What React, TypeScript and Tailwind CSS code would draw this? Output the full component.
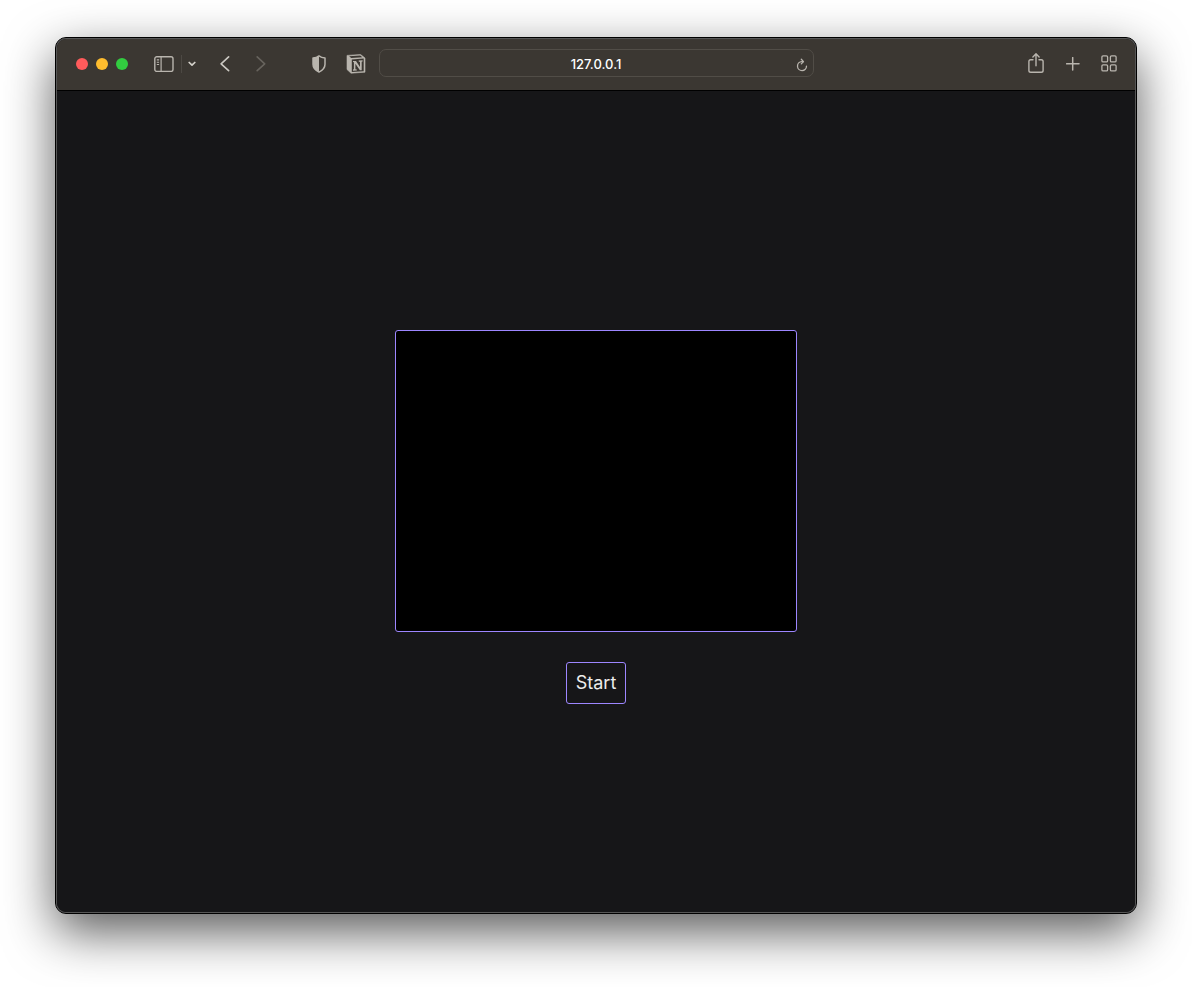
import React from "react";

const iconButton = "flex h-7 items-center justify-center text-[#b9b5ae]";

function SidebarIcon() {
  return (
    <svg width="20" height="16" viewBox="0 0 20 16" fill="none" stroke="currentColor" strokeWidth="1.4" aria-hidden="true">
      <rect x="0.8" y="0.8" width="18.2" height="14.6" rx="2" />
      <path d="M7.1 1v14.4" strokeWidth="1.2" />
      <path d="M2.8 3.9h2.3M2.8 6.2h2.3M2.8 8.5h2.3" strokeWidth="1.1" />
    </svg>
  );
}

function SmallChevron() {
  return (
    <svg width="8" height="6" viewBox="0 0 8 6" fill="none" stroke="currentColor" strokeWidth="1.7" strokeLinecap="round" strokeLinejoin="round" aria-hidden="true">
      <path d="M1.2 1.500 4 4.200l2.800-2.700" />
    </svg>
  );
}

function BackIcon() {
  return (
    <svg width="10" height="16" viewBox="0 0 10 16" fill="none" stroke="currentColor" strokeWidth="1.6" strokeLinecap="round" strokeLinejoin="round" aria-hidden="true">
      <path d="M8.600 0.900 1.100 7.800l7.500 6.900" />
    </svg>
  );
}

function ForwardIcon() {
  return (
    <svg width="10" height="16" viewBox="0 0 10 16" fill="none" stroke="currentColor" strokeWidth="1.6" strokeLinecap="round" strokeLinejoin="round" aria-hidden="true">
      <path d="M1.200 0.900 8.700 7.800l-7.500 6.900" />
    </svg>
  );
}

function ShieldIcon() {
  return (
    <svg width="14" height="18" viewBox="0 0 14 18" aria-hidden="true">
      <path d="M7 0.9C5.4 2.2 3.3 2.9 1 3v6.2c0 3.7 2.3 6.1 6 7.9 3.7-1.8 6-4.2 6-7.900V3C10.7 2.9 8.6 2.2 7 .9Z" fill="none" stroke="currentColor" strokeWidth="1.5" strokeLinejoin="round" />
      <path d="M7 .9C5.4 2.2 3.3 2.9 1 3v6.2c0 3.7 2.3 6.1 6 7.9Z" fill="currentColor" />
    </svg>
  );
}

function NotionIcon() {
  return (
    <svg width="20" height="20" viewBox="0 0 20 20" fill="none" aria-hidden="true">
      <path d="M1 1.400 14.600.5 19 4v14.200L5 19.200 1 15.500Z" fill="currentColor" stroke="currentColor" strokeWidth="0.600" strokeLinejoin="round" />
      <path d="M3.200 2.300 14.200 1.600 16.300 3.200 5.200 3.900Z" fill="#3b3732" />
      <path d="M5.800 5.400 17.700 4.600v12.700L5.800 18Z" fill="#3b3732" />
      <path d="M7 6.900h3l4 6.200V7.900l-1.300-.3V6.500l3.900-.2v1.100l-.9.3v8.600h-1.800L9.400 9.700v5.500l1.400.3v1L7 16.700v-1.100l.9-.3V8.200L7 7.900Z" fill="currentColor" />
    </svg>
  );
}

function ReloadIcon() {
  return (
    <svg width="12" height="14" viewBox="0 0 12 14" fill="none" stroke="currentColor" strokeWidth="1.3" strokeLinecap="round" strokeLinejoin="round" aria-hidden="true">
      <path d="M7.200 3.600H5.800a4.500 4.500 0 1 0 4.700 4.500" />
      <path d="M5.300 1.300 7.500 3.600 5.300 5.900" />
    </svg>
  );
}

function ShareIcon() {
  return (
    <svg width="16" height="22" viewBox="0 0 16 22" fill="none" stroke="currentColor" strokeWidth="1.4" strokeLinecap="round" strokeLinejoin="round" aria-hidden="true">
      <path d="M5 6.800H2.700A1.800 1.800 0 0 0 .9 8.600v8.900a1.800 1.800 0 0 0 1.800 1.800h10.600a1.800 1.800 0 0 0 1.800-1.800V8.600a1.800 1.800 0 0 0-1.800-1.800H11" />
      <path d="M8 12.800V1M4.900 3.900 8 .8l3.100 3.100" />
    </svg>
  );
}

function PlusIcon() {
  return (
    <svg width="14" height="14" viewBox="0 0 14 14" fill="none" stroke="currentColor" strokeWidth="1.5" strokeLinecap="round" aria-hidden="true">
      <path d="M6.700 .6v12.400M.6 6.700h12.400" />
    </svg>
  );
}

function TabsIcon() {
  return (
    <svg width="16" height="18" viewBox="0 0 16 18" fill="none" stroke="currentColor" strokeWidth="1.3" aria-hidden="true">
      <rect x="0.9" y="0.9" width="5.7" height="6" rx="1.2" />
      <rect x="9.4" y="0.9" width="5.7" height="6" rx="1.2" />
      <rect x="0.9" y="9.9" width="5.7" height="6" rx="1.2" />
      <rect x="9.4" y="9.9" width="5.7" height="6" rx="1.2" />
    </svg>
  );
}

function Toolbar() {
  return (
    <header className="grid h-[52px] shrink-0 grid-cols-[1fr_minmax(0,435px)_1fr] items-center border-b border-black bg-[#3b3732] pb-px">
      <div className="flex items-center pl-[19px]">
        <div className="flex gap-2">
          <button type="button" aria-label="Close" className="size-3 rounded-full bg-[#ff5b5b]" />
          <button type="button" aria-label="Minimize" className="size-3 rounded-full bg-[#febc2e]" />
          <button type="button" aria-label="Zoom" className="size-3 rounded-full bg-[#32cc40]" />
        </div>
        <button type="button" aria-label="Show sidebar" className={`${iconButton} ml-[26px]`}>
          <SidebarIcon />
        </button>
        <div className="ml-[7px] mr-1.5 h-[18px] w-px bg-[#4d4944]" />
        <button type="button" aria-label="Tab groups" className="flex h-7 items-center text-[#d4d1cb]">
          <SmallChevron />
        </button>
        <button type="button" aria-label="Back" className="ml-6 flex h-7 items-center text-[#cbc8c2]">
          <BackIcon />
        </button>
        <button type="button" aria-label="Forward" className="ml-[26px] flex h-7 items-center text-[#67635d]">
          <ForwardIcon />
        </button>
        <button type="button" aria-label="Privacy report" className={`${iconButton} ml-[46px]`}>
          <ShieldIcon />
        </button>
        <button type="button" aria-label="Notion" className={`${iconButton} ml-5`}>
          <NotionIcon />
        </button>
      </div>

      <div className="mb-0.5 grid h-7 grid-cols-[1fr_auto_1fr] items-center rounded-[7px] border border-[#514d47] px-[5px]">
        <span />
        <span className="pt-0.5 font-[Inter,sans-serif] text-[13px] font-medium leading-4 text-white">127.0.0.1</span>
        <button type="button" aria-label="Reload" className="mt-1 justify-self-end text-[#b9b5ae]">
          <ReloadIcon />
        </button>
      </div>

      <div className="flex items-center justify-end gap-[21px] pr-[18px]">
        <button type="button" aria-label="Share" className={`${iconButton} mr-px`}>
          <ShareIcon />
        </button>
        <button type="button" aria-label="New tab" className={iconButton}>
          <PlusIcon />
        </button>
        <button type="button" aria-label="Tab overview" className={iconButton}>
          <TabsIcon />
        </button>
      </div>
    </header>
  );
}

export default function App() {
  return (
    <div className="flex min-h-screen bg-white px-[55px] pb-[73px] pt-[37px]">
      <div className="flex grow rounded-[11px] border border-black bg-[#626262] shadow-[0_18px_50px_rgba(0,0,0,0.65)]">
        <div className="flex grow flex-col overflow-hidden rounded-[10px] bg-[#161618] ring-1 ring-inset ring-[#565656]">
          <div className="m-px flex grow flex-col overflow-hidden rounded-[9px]">
            <Toolbar />
            <main className="flex grow flex-col items-center justify-center gap-[30px] bg-[#161618] pt-[31px]">
              <canvas
                width={400}
                height={300}
                aria-label="Game area"
                className="max-w-full rounded-[3px] border border-[#9d86ff] bg-black"
              />
              <button
                type="button"
                className="h-[42px] rounded-[3px] border border-[#9d86ff] px-[9px] font-[Inter,sans-serif] text-[18px] leading-6 text-[#ececec]"
              >
                Start
              </button>
            </main>
          </div>
        </div>
      </div>
    </div>
  );
}
